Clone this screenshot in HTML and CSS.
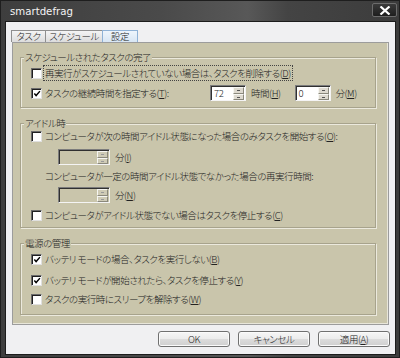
FILE: index.html
```html
<!DOCTYPE html>
<html lang="ja">
<head>
<meta charset="utf-8">
<link rel="stylesheet" href="styles.css">
</head>
<body>
<div class="window">
  <div class="titlebar">
    <span class="title">smartdefrag</span>
    <span class="close"><svg width="12" height="9" viewBox="0 0 12 9"><path d="M1.5 0.5 L10.5 8.5 M10.5 0.5 L1.5 8.5" stroke="#fff" stroke-width="2.2" fill="none"/></svg></span>
  </div>
  <div class="client">
    <div class="tabs">
      <div class="tab t1">タスク</div>
      <div class="tab t2">スケジュール</div>
      <div class="tab t3 active">設定</div>
    </div>
    <div class="panel">
      <div class="group g1">
        <span class="legend">スケジュールされたタスクの完了</span>
        <div class="row r-a">
          <span class="cb"></span>
          <span class="lbl focus">再実行がスケジュールされていない場合は、タスクを削除する(<u>D</u>)</span>
        </div>
        <div class="row r-b">
          <span class="cb on"><svg width="9" height="9" viewBox="0 0 9 9"><path d="M1.5 4.5 L3.5 6.8 L7.8 1.8" stroke="#000" stroke-width="1.6" fill="none"/></svg></span>
          <span class="lbl fixed">タスクの継続時間を指定する(<u>T</u>):</span>
          <span class="spin"><span class="val">72</span><span class="btns"><i></i><i></i></span></span>
          <span class="unit u1">時間(<u>H</u>)</span>
          <span class="spin"><span class="val">0</span><span class="btns"><i></i><i></i></span></span>
          <span class="unit u2">分(<u>M</u>)</span>
        </div>
      </div>
      <div class="group g2">
        <span class="legend">アイドル時</span>
        <div class="row r-c">
          <span class="cb"></span>
          <span class="lbl">コンピュータが次の時間アイドル状態になった場合のみタスクを開始する(<u>O</u>):</span>
        </div>
        <div class="row r-d">
          <span class="spin wide dis"><span class="val"></span><span class="btns"><i></i><i></i></span></span>
          <span class="unit">分(<u>I</u>)</span>
        </div>
        <div class="row r-e">
          <span class="lbl">コンピュータが一定の時間アイドル状態でなかった場合の再実行時間:</span>
        </div>
        <div class="row r-d r-f">
          <span class="spin wide dis"><span class="val"></span><span class="btns"><i></i><i></i></span></span>
          <span class="unit">分(<u>N</u>)</span>
        </div>
        <div class="row r-g">
          <span class="cb"></span>
          <span class="lbl">コンピュータがアイドル状態でない場合はタスクを停止する(<u>C</u>)</span>
        </div>
      </div>
      <div class="group g3">
        <span class="legend">電源の管理</span>
        <div class="row r-h">
          <span class="cb on"><svg width="9" height="9" viewBox="0 0 9 9"><path d="M1.5 4.5 L3.5 6.8 L7.8 1.8" stroke="#000" stroke-width="1.6" fill="none"/></svg></span>
          <span class="lbl">バッテリ モードの場合、タスクを実行しない(<u>B</u>)</span>
        </div>
        <div class="row r-i">
          <span class="cb on"><svg width="9" height="9" viewBox="0 0 9 9"><path d="M1.5 4.5 L3.5 6.8 L7.8 1.8" stroke="#000" stroke-width="1.6" fill="none"/></svg></span>
          <span class="lbl">バッテリ モードが開始されたら、タスクを停止する(<u>Y</u>)</span>
        </div>
        <div class="row r-j">
          <span class="cb"></span>
          <span class="lbl">タスクの実行時にスリープを解除する(<u>W</u>)</span>
        </div>
      </div>
    </div>
    <div class="buttons">
      <span class="btn">OK</span>
      <span class="btn">キャンセル</span>
      <span class="btn">適用(<u>A</u>)</span>
    </div>
  </div>
</div>
</body>
</html>
```

FILE: styles.css
```css
* { box-sizing: border-box; }
html, body { margin: 0; padding: 0; }
body {
  width: 400px;
  height: 358px;
  overflow: hidden;
  background: #2c2c2c;
  font-family: "Noto Sans CJK JP", "Noto Sans", sans-serif;
  font-size: 9.5px;
  font-weight: 300;
  letter-spacing: -0.45px;
  font-feature-settings: "palt";
  color: #222;
}
u { text-decoration: underline; text-underline-offset: 1px; }
.window {
  width: 400px;
  height: 358px;
  display: flex;
  flex-direction: column;
  background: linear-gradient(to right, #3e3e3e 0%, #4a4a4a 40%, #585858 62%, #444 72%, #3c3c3c 100%);
  border: 1px solid #1e1e1e;
}
.titlebar {
  height: 21px;
  flex: none;
  display: flex;
  justify-content: space-between;
  align-items: flex-start;
  padding: 0 2px 0 9px;
}
.title {
  font-family: "DejaVu Sans", sans-serif;
  font-feature-settings: normal;
  font-weight: 400;
  font-size: 10.2px;
  color: #f4f4f4;
  margin-top: 5px;
  letter-spacing: 0;
}
.close {
  margin-top: 2px;
  width: 25px;
  height: 14px;
  background: linear-gradient(#3a3a3a, #1e1e1e);
  border: 1px solid #6c6c6c;
  border-radius: 2px;
  display: flex;
  align-items: center;
  justify-content: center;
}
.client {
  margin: 0 4px 3px 5px;
  flex: 1;
  background: #f0f0f2;
  box-shadow: 0 0 0 1px #1c1c1c;
  padding-top: 8px;
  display: flex;
  flex-direction: column;
}
.tabs {
  display: flex;
  height: 12px;
  margin-left: 5px;
}
.tab {
  height: 12px;
  border: 1px solid #8f8f8f;
  border-bottom: none;
  background: linear-gradient(#f4f4f4, #dcdcdc);
  line-height: 10px;
  text-align: center;
}
.t1 { width: 35px; }
.t2 { width: 58px; margin-left: -1px; }
.t3 { width: 36px; margin-left: -1px; }
.tab.active {
  background: linear-gradient(#eef5fc, #d8e6f4);
  border-color: #8fb2d6;
}
.panel {
  margin-left: 6px;
  width: 377px;
  height: 283px;
  background: #c9c5ab;
  border: 1px solid #9c9c9c;
  box-shadow: inset -1px -1px 0 #e8e6da;
  padding: 14px 0 0 7px;
  display: flex;
  flex-direction: column;
}
.group {
  position: relative;
  width: 356px;
  border: 1px solid #a7a38c;
  box-shadow: inset 1px 1px 0 #ebe9dd, 1px 1px 0 #ebe9dd;
  padding-left: 10px;
  display: flex;
  flex-direction: column;
}
.g1 { height: 51px; }
.g2 { height: 105px; margin-top: 15px; }
.g3 { height: 72px; margin-top: 15px; }
.legend {
  position: absolute;
  left: 3px;
  top: -8px;
  background: #c9c5ab;
  padding: 0 1px;
  line-height: 14px;
}
.row {
  display: flex;
  align-items: center;
  height: 16px;
  white-space: nowrap;
}
.r-a { margin-top: 7px; }
.r-b { margin-top: 4px; }
.r-c { margin-top: 4px; }
.r-d { margin-top: 5px; padding-left: 27px; }
.r-e { margin-top: 3px; padding-left: 14px; }
.r-f { margin-top: 3px; }
.r-g { margin-top: 4px; }
.r-h { margin-top: 7px; }
.r-i { margin-top: 5px; }
.r-j { margin-top: 3px; }
.cb {
  width: 11px;
  height: 11px;
  flex: none;
  background: #fff;
  border: 1px solid;
  border-color: #6b6b6b #e0e0e0 #e0e0e0 #6b6b6b;
  box-shadow: inset 1px 1px 0 #202020;
  display: flex;
  align-items: center;
  justify-content: center;
  margin-right: 3px;
}
.cb svg { display: block; margin: 1px 0 0 1px; }
.lbl { line-height: 14px; }
.lbl.focus { outline: 1px dotted #444; outline-offset: 0; padding: 0 1px; margin-left: -1px; }
.lbl.fixed { width: 165px; }
.spin {
  width: 36px;
  height: 16px;
  flex: none;
  display: flex;
  background: #fff;
  border: 1px solid;
  border-color: #7c7c7c #f4f4f4 #f4f4f4 #7c7c7c;
  box-shadow: inset 1px 1px 0 #303030;
  padding: 1px 1px 0 2px;
}
.spin.wide { width: 52px; }
.spin.dis { background: #c9c5ab; }
.val { flex: 1; line-height: 13px; padding-left: 1px; }
.btns {
  width: 11px;
  display: flex;
  flex-direction: column;
}
.btns i {
  flex: 1;
  background: #dedad0;
  border: 1px solid;
  border-color: #f6f6f2 #8a887c #8a887c #f6f6f2;
  position: relative;
}
.btns i::after {
  content: "";
  position: absolute;
  left: 3px;
  top: 2px;
  width: 3px;
  height: 1px;
  background: #555;
}
.spin.dis .btns i { background: #cfcbb6; }
.spin.dis .btns i::after { background: #999; }
.unit { margin-left: 5px; line-height: 14px; }
.u1 { margin-right: 14px; }
.buttons {
  display: flex;
  justify-content: flex-end;
  gap: 8px;
  margin-top: 6px;
  padding-right: 5px;
}
.btn {
  width: 72px;
  height: 16px;
  border: 1px solid #707070;
  border-radius: 3px;
  background: linear-gradient(#f6f6f6 0%, #ececec 48%, #dcdcdc 52%, #cfcfcf 100%);
  box-shadow: inset 0 0 0 1px #fbfbfb;
  text-align: center;
  line-height: 14px;
}
```
